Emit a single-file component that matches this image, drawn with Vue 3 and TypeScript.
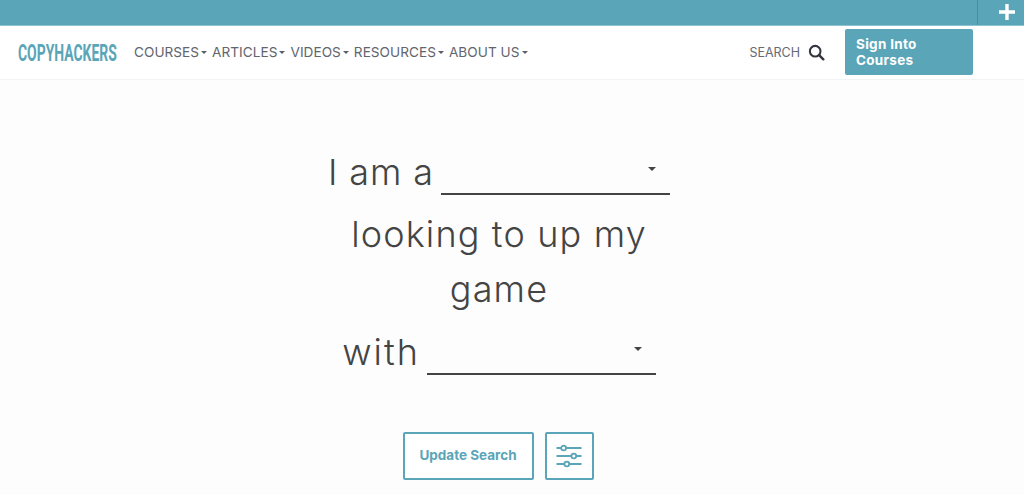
<script setup lang="ts">
const navItems: string[] = ['COURSES', 'ARTICLES', 'VIDEOS', 'RESOURCES', 'ABOUT US']
</script>

<template>
  <div class="page">
    <div class="topbar">
      <div class="plus-cell">
        <svg width="18" height="18" viewBox="0 0 18 18"><path d="M9 1v16M1 9h16" stroke="#fff" stroke-width="3.4" fill="none" /></svg>
      </div>
    </div>
    <header class="header">
      <div class="logo"><span>COPYHACKERS</span></div>
      <nav class="nav">
        <a v-for="item in navItems" :key="item" class="nav-item">{{ item }}<i class="caret small"></i></a>
      </nav>
      <div class="search">
        <span>SEARCH</span>
        <svg width="17" height="17" viewBox="0 0 18 18"><circle cx="7.6" cy="7.6" r="5.6" fill="none" stroke="#33363f" stroke-width="2.2" /><path d="M11.8 11.8l4.4 4.4" stroke="#33363f" stroke-width="2.6" stroke-linecap="round" /></svg>
      </div>
      <a class="signin">Sign Into Courses</a>
    </header>
    <main class="main">
      <div class="line first">
        <span>I am a</span>
        <span class="select"><i class="caret"></i></span>
      </div>
      <div class="sentence">looking to up my game</div>
      <div class="line third">
        <span>with</span>
        <span class="select"><i class="caret"></i></span>
      </div>
      <div class="actions">
        <button class="btn update">Update Search</button>
        <button class="btn filter" aria-label="Filters">
          <svg width="26" height="24" viewBox="0 0 26 24" fill="none" stroke="#5aa5b8" stroke-width="1.8">
            <path d="M0.5 4h5M10 4h15.5M0.5 12h15M20 12h5.5M0.5 20h8M13 20h12.5" />
            <circle cx="7.6" cy="4" r="2.4" />
            <circle cx="17.8" cy="12" r="2.4" />
            <circle cx="10.8" cy="20" r="2.4" />
          </svg>
        </button>
      </div>
    </main>
  </div>
</template>

<style>
html, body { margin: 0; background: #fff; }
</style>

<style scoped>
.page {
  width: 1024px;
  height: 495px;
  overflow: hidden;
  font-family: "Inter", "Liberation Sans", sans-serif;
  color: #444;
  background: #fdfdfd;
}
.topbar {
  height: 25px;
  background: #5aa5b8;
  display: flex;
  justify-content: flex-end;
  border-bottom: 1px solid #8cc3d0;
}
.plus-cell {
  width: 47px;
  border-left: 1px solid #4c8fa0;
  display: flex;
  align-items: center;
  justify-content: center;
  padding-left: 12px;
  padding-bottom: 2px;
  box-sizing: border-box;
}
.header {
  height: 53px;
  background: #fff;
  border-bottom: 1px solid #f2f3f4;
  display: flex;
  align-items: center;
  padding-left: 18px;
}
.logo {
  width: 99px;
  height: 24px;
  color: #5aa5b8;
  font-family: "Roboto", sans-serif;
  font-weight: 700;
  font-size: 24px;
  line-height: 24px;
  white-space: nowrap;
}
.logo span {
  display: inline-block;
  transform: scaleX(0.58);
  transform-origin: left center;
}
.nav {
  display: flex;
  gap: 5px;
  margin-left: 17px;
  margin-top: -2px;
}
.nav-item {
  font-size: 13.6px;
  color: #62656d;
  letter-spacing: 0.04px;
  white-space: nowrap;
}
.caret {
  display: inline-block;
  width: 0;
  height: 0;
  border-left: 4px solid transparent;
  border-right: 4px solid transparent;
  border-top: 4px solid #444;
}
.caret.small {
  margin-left: 2px;
  vertical-align: middle;
  border-left-width: 3px;
  border-right-width: 3px;
  border-top-width: 3px;
  border-top-color: #5b5e66;
}
.search {
  margin-left: auto;
  display: flex;
  align-items: center;
  gap: 8px;
  font-size: 12.5px;
  color: #666a72;
}
.signin {
  box-sizing: border-box;
  width: 128px;
  height: 46px;
  margin-left: 20px;
  margin-right: 51px;
  margin-top: -2px;
  padding: 7px 11px;
  border-radius: 2px;
  background: #5aa5b8;
  color: #fff;
  font-weight: 700;
  font-size: 13.5px;
  letter-spacing: 0.3px;
  line-height: 16px;
}
.main {
  width: 342px;
  margin-left: 328px;
  font-size: 36px;
  font-weight: 300;
  letter-spacing: 1.15px;
  color: #444;
  text-align: center;
}
.line {
  display: flex;
  align-items: baseline;
  justify-content: center;
  gap: 7px;
  white-space: nowrap;
}
.first { margin-top: 65px; letter-spacing: 0.9px; }
.third { margin-top: 8px; letter-spacing: 2px; }
.select {
  position: relative;
  display: block;
  flex: none;
  width: 229px;
  height: 40px;
  box-sizing: border-box;
  border-bottom: 2px solid #444;
  transform: translateY(10px);
}
.select .caret {
  position: absolute;
  right: 14px;
  top: 12px;
}
.sentence {
  width: 300px;
  margin: 13px auto 0;
  line-height: 55px;
}
.actions {
  display: flex;
  justify-content: center;
  gap: 11px;
  margin-top: 58px;
  margin-left: -2px;
  letter-spacing: 0;
}
.btn {
  height: 48px;
  box-sizing: border-box;
  background: #fff;
  border: 2px solid #5aa5b8;
  border-radius: 2px;
  color: #5aa5b8;
  font-family: inherit;
  font-weight: 700;
  font-size: 13.5px;
  padding: 0;
  display: flex;
  align-items: center;
  justify-content: center;
}
.update { width: 131px; padding-bottom: 2px; }
.filter { width: 49px; }
</style>
